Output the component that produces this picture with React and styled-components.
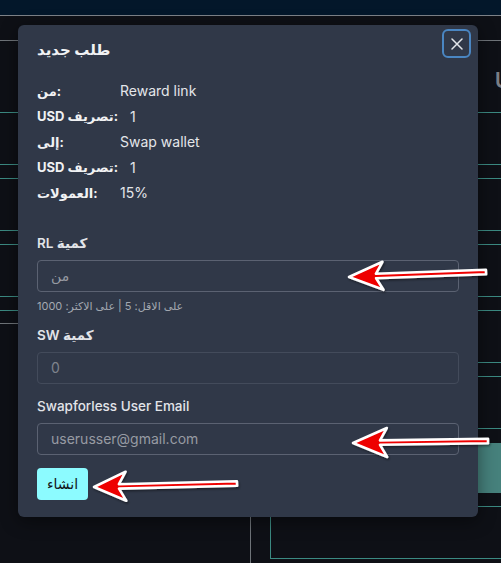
import React from "react";
import styled, { createGlobalStyle } from "styled-components";

const GlobalStyle = createGlobalStyle`
  html, body { margin: 0; padding: 0; background: #0e1016; }
  body { font-family: Inter, "DejaVu Sans", sans-serif; }
  * { box-sizing: border-box; }
`;

const Page = styled.div`
  position: relative;
  width: 501px;
  height: 563px;
  overflow: hidden;
  background: #0e1016;
  display: flex;
  flex-direction: column;
`;

const TopBar = styled.div`
  height: 16px;
  flex: none;
  background: #03172a;
  border-bottom: 1px solid #7d8288;
`;

const Rule = styled.div`
  flex: none;
  height: 1px;
  margin-top: ${(p) => p.$gap}px;
  background: ${(p) => (p.$gray ? "#6f7479" : "#3b8a82")};
  width: ${(p) => (p.$side === "left" ? "20px" : p.$side === "right" ? "26px" : "100%")};
  margin-left: ${(p) => (p.$side === "right" ? "auto" : "0")};
`;

const HeadRow = styled.div`
  flex: none;
  height: 71px;
  display: flex;
  justify-content: flex-end;
  align-items: center;
  padding-top: 6px;
  overflow: hidden;
`;

const HeadGlyph = styled.span`
  font-family: Inter, sans-serif;
  font-size: 22px;
  font-weight: 600;
  color: #7b7f86;
  margin-right: -10px;
  line-height: 20px;
`;

const TealBlock = styled.div`
  flex: none;
  margin-top: 14px;
  margin-left: auto;
  width: 26px;
  height: 50px;
  background: #46817c;
`;

const BottomArea = styled.div`
  flex: 1;
  margin-top: 13px;
  display: flex;
  padding-left: 250px;
  gap: 19px;
`;

const Divider = styled.div`
  width: 1px;
  background: #6f7479;
`;

const OutlineBox = styled.div`
  flex: 1;
  height: 53px;
  border: 1px solid #3b8a82;
  border-right: none;
`;

const Modal = styled.div`
  position: absolute;
  left: 18px;
  top: 25px;
  width: 460px;
  height: 492px;
  background: #303848;
  border-radius: 6px;
  box-shadow: 0 4px 18px rgba(0, 0, 0, 0.45);
  padding: 4px 19px 18px 19px;
  display: flex;
  flex-direction: column;
  color: #e8e9ec;
`;

const Header = styled.div`
  display: flex;
  justify-content: space-between;
  align-items: flex-start;
  margin-right: -12px;
  height: 29px;
`;

const Title = styled.h2`
  margin: 11px 0 0;
  font-size: 15px;
  line-height: 20px;
  font-weight: 700;
  color: #f1f2f4;
`;

const CloseButton = styled.button`
  width: 29px;
  height: 29px;
  padding: 0;
  border: 2px solid #4a86c2;
  border-radius: 6px;
  background: transparent;
  display: flex;
  align-items: center;
  justify-content: center;
  cursor: pointer;
`;

const InfoList = styled.div`
  margin-top: 20px;
  display: flex;
  flex-direction: column;
`;

const InfoRow = styled.div`
  display: grid;
  grid-template-columns: 83px 1fr;
  height: 25.5px;
  align-items: center;
  font-size: 14px;
`;

const InfoLabel = styled.span`
  font-size: 13px;
  font-weight: 700;
  color: #f0f1f3;
  white-space: nowrap;
`;

const InfoValue = styled.span`
  color: #e4e6ea;
  padding-left: ${(p) => (p.$indent ? "10px" : "0")};
`;

const Form = styled.div`
  margin-top: 28px;
  display: flex;
  flex-direction: column;
  gap: 13px;
`;

const Field = styled.div`
  display: flex;
  flex-direction: column;
  gap: 8px;
`;

const Label = styled.label`
  font-size: 13.5px;
  line-height: 18px;
  font-weight: ${(p) => (p.$strong ? 600 : 500)};
  color: #e2e4e8;
`;

const Input = styled.input`
  width: 100%;
  height: 32px;
  padding: 0 13px;
  border: 1px solid ${(p) => (p.disabled ? "#434b5b" : "#5b6272")};
  border-radius: 4px;
  background: transparent;
  font-family: Inter, "DejaVu Sans", sans-serif;
  font-size: 14px;
  color: ${(p) => (p.disabled ? "#7e838d" : "#e4e6ea")};
  outline: none;
  &::placeholder { color: #979ba3; }
`;

const Helper = styled.div`
  margin-top: -1px;
  font-size: 11px;
  line-height: 14px;
  color: #a3a8b0;
`;

const SubmitButton = styled.button`
  align-self: flex-start;
  width: 51px;
  height: 32px;
  border: none;
  border-radius: 4px;
  background: #8cfbff;
  color: #121418;
  font-family: Inter, "DejaVu Sans", sans-serif;
  font-size: 14px;
  font-weight: 500;
  cursor: pointer;
`;

const Annotations = styled.svg`
  position: absolute;
  left: 0;
  top: 0;
  width: 501px;
  height: 563px;
  pointer-events: none;
`;

function arrowPoints(tail, tip, headLen, headHalf, neckLen, shaftHalf) {
  const dx = tail[0] - tip[0];
  const dy = tail[1] - tip[1];
  const len = Math.hypot(dx, dy);
  const ux = dx / len, uy = dy / len;
  const nx = -uy, ny = ux;
  const P = (base, a, b) => [base[0] + ux * a + nx * b, base[1] + uy * a + ny * b];
  const pts = [
    tip,
    P(tip, headLen, headHalf),
    P(tip, neckLen, shaftHalf),
    P(tail, 0, shaftHalf),
    P(tail, 0, -shaftHalf),
    P(tip, neckLen, -shaftHalf),
    P(tip, headLen, -headHalf),
  ];
  return pts.map((p) => `${p[0].toFixed(1)},${p[1].toFixed(1)}`).join(" ");
}

const arrows = [
  { tail: [486, 272], tip: [349, 277], head: 34, half: 14, neck: 27 },
  { tail: [488, 441], tip: [353, 443], head: 34, half: 14.5, neck: 27 },
  { tail: [237, 483.5], tip: [94, 487], head: 32, half: 14.5, neck: 25 },
];

const info = [
  { label: "من:", value: "Reward link" },
  { label: "USD تصريف:", value: "1", indent: true },
  { label: "إلى:", value: "Swap wallet" },
  { label: "USD تصريف:", value: "1", indent: true },
  { label: "العمولات:", value: "15%" },
];

export default function App() {
  return (
    <>
      <GlobalStyle />
      <Page>
        <TopBar />
        <Rule $gap={24} $gray />
        <HeadRow>
          <HeadGlyph>U</HeadGlyph>
        </HeadRow>
        <Rule $gap={0} />
        <Rule $gap={51} />
        <Rule $gap={13} />
        <Rule $gap={51} />
        <Rule $gap={13} />
        <Rule $gap={51} />
        <Rule $gap={13} />
        <Rule $gap={12} $gray $side="left" />
        <Rule $gap={38} $side="right" />
        <Rule $gap={13} $side="right" />
        <Rule $gap={51} $side="right" />
        <TealBlock />
        <BottomArea>
          <Divider />
          <OutlineBox />
        </BottomArea>

        <Modal>
          <Header>
            <Title>طلب جديد</Title>
            <CloseButton aria-label="close">
              <svg width="12" height="12" viewBox="0 0 12 12">
                <path d="M1 1 L11 11 M11 1 L1 11" stroke="#e3e6ea" strokeWidth="1.5" strokeLinecap="round" />
              </svg>
            </CloseButton>
          </Header>

          <InfoList>
            {info.map((r, i) => (
              <InfoRow key={i}>
                <InfoLabel>{r.label}</InfoLabel>
                <InfoValue $indent={r.indent}>{r.value}</InfoValue>
              </InfoRow>
            ))}
          </InfoList>

          <Form>
            <Field>
              <Label $strong>RL كمية</Label>
              <Input placeholder="من" />
              <Helper>على الاقل: 5 | على الاكثر: 1000</Helper>
            </Field>
            <Field>
              <Label $strong>SW كمية</Label>
              <Input value="0" disabled readOnly />
            </Field>
            <Field>
              <Label>Swapforless User Email</Label>
              <Input placeholder="userusser@gmail.com" />
            </Field>
            <SubmitButton>انشاء</SubmitButton>
          </Form>
        </Modal>

        <Annotations viewBox="0 0 501 563">
          <defs>
            <filter id="arrowShadow" x="-20%" y="-50%" width="140%" height="200%">
              <feDropShadow dx="1" dy="1.5" stdDeviation="1.2" floodColor="#000" floodOpacity="0.45" />
            </filter>
          </defs>
          {arrows.map((a, i) => (
            <polygon
              key={i}
              points={arrowPoints(a.tail, a.tip, a.head, a.half, a.neck, 2.2)}
              fill="#ee0000"
              stroke="#ffffff"
              strokeWidth="2.6"
              strokeLinejoin="round"
              filter="url(#arrowShadow)"
            />
          ))}
        </Annotations>
      </Page>
    </>
  );
}
